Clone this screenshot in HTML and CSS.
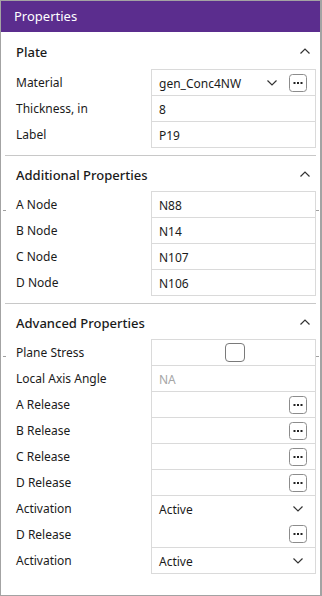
FILE: index.html
```html
<!DOCTYPE html>
<html>
<head>
  <title>Properties</title>
  <link rel="stylesheet" href="styles.css">
</head>
<body>
  <div class="panel">
    <div class="title">Properties</div>

    <div class="section first">
      <div class="sec-head">
        <span>Plate</span>
        <svg class="caret" width="10" height="6" viewBox="0 0 10 6"><path d="M0.5 5.5 L5 1 L9.5 5.5" fill="none" stroke="#333" stroke-width="1.2"/></svg>
      </div>
      <div class="grid">
        <div class="lbl">Material</div>
        <div class="val">
          <span class="txt">gen_Conc4NW</span>
          <svg class="drop" width="10" height="6" viewBox="0 0 10 6"><path d="M0.5 0.5 L5 5 L9.5 0.5" fill="none" stroke="#333" stroke-width="1.2"/></svg>
          <svg class="more" width="18" height="18" viewBox="0 0 18 18"><rect x="0.5" y="0.5" width="17" height="17" rx="3" fill="#fff" stroke="#8c8c8c"/><rect x="4.5" y="8" width="2" height="2" fill="#222"/><rect x="8" y="8" width="2" height="2" fill="#222"/><rect x="11.5" y="8" width="2" height="2" fill="#222"/></svg>
        </div>
        <div class="lbl">Thickness, in</div>
        <div class="val"><span class="txt">8</span></div>
        <div class="lbl">Label</div>
        <div class="val last"><span class="txt">P19</span></div>
      </div>
    </div>

    <div class="section">
      <div class="sec-head">
        <span>Additional Properties</span>
        <svg class="caret" width="10" height="6" viewBox="0 0 10 6"><path d="M0.5 5.5 L5 1 L9.5 5.5" fill="none" stroke="#333" stroke-width="1.2"/></svg>
      </div>
      <div class="grid">
        <div class="lbl">A Node</div>
        <div class="val"><span class="txt">N88</span></div>
        <div class="lbl">B Node</div>
        <div class="val"><span class="txt">N14</span></div>
        <div class="lbl">C Node</div>
        <div class="val"><span class="txt">N107</span></div>
        <div class="lbl">D Node</div>
        <div class="val last"><span class="txt">N106</span></div>
      </div>
    </div>

    <div class="section end">
      <div class="sec-head">
        <span>Advanced Properties</span>
        <svg class="caret" width="10" height="6" viewBox="0 0 10 6"><path d="M0.5 5.5 L5 1 L9.5 5.5" fill="none" stroke="#333" stroke-width="1.2"/></svg>
      </div>
      <div class="grid">
        <div class="lbl">Plane Stress</div>
        <div class="val center"><span class="check"></span></div>
        <div class="lbl">Local Axis Angle</div>
        <div class="val"><span class="txt dim">NA</span></div>
        <div class="lbl">A Release</div>
        <div class="val"><span class="txt"></span>
          <svg class="more" width="18" height="18" viewBox="0 0 18 18"><rect x="0.5" y="0.5" width="17" height="17" rx="3" fill="#fff" stroke="#8c8c8c"/><rect x="4.5" y="8" width="2" height="2" fill="#222"/><rect x="8" y="8" width="2" height="2" fill="#222"/><rect x="11.5" y="8" width="2" height="2" fill="#222"/></svg>
        </div>
        <div class="lbl">B Release</div>
        <div class="val"><span class="txt"></span>
          <svg class="more" width="18" height="18" viewBox="0 0 18 18"><rect x="0.5" y="0.5" width="17" height="17" rx="3" fill="#fff" stroke="#8c8c8c"/><rect x="4.5" y="8" width="2" height="2" fill="#222"/><rect x="8" y="8" width="2" height="2" fill="#222"/><rect x="11.5" y="8" width="2" height="2" fill="#222"/></svg>
        </div>
        <div class="lbl">C Release</div>
        <div class="val"><span class="txt"></span>
          <svg class="more" width="18" height="18" viewBox="0 0 18 18"><rect x="0.5" y="0.5" width="17" height="17" rx="3" fill="#fff" stroke="#8c8c8c"/><rect x="4.5" y="8" width="2" height="2" fill="#222"/><rect x="8" y="8" width="2" height="2" fill="#222"/><rect x="11.5" y="8" width="2" height="2" fill="#222"/></svg>
        </div>
        <div class="lbl">D Release</div>
        <div class="val"><span class="txt"></span>
          <svg class="more" width="18" height="18" viewBox="0 0 18 18"><rect x="0.5" y="0.5" width="17" height="17" rx="3" fill="#fff" stroke="#8c8c8c"/><rect x="4.5" y="8" width="2" height="2" fill="#222"/><rect x="8" y="8" width="2" height="2" fill="#222"/><rect x="11.5" y="8" width="2" height="2" fill="#222"/></svg>
        </div>
        <div class="lbl">Activation</div>
        <div class="val"><span class="txt">Active</span>
          <svg class="drop wide" width="10" height="6" viewBox="0 0 10 6"><path d="M0.5 0.5 L5 5 L9.5 0.5" fill="none" stroke="#333" stroke-width="1.2"/></svg>
        </div>
        <div class="lbl">D Release</div>
        <div class="val open"><span class="txt"></span>
          <svg class="more" width="18" height="18" viewBox="0 0 18 18"><rect x="0.5" y="0.5" width="17" height="17" rx="3" fill="#fff" stroke="#8c8c8c"/><rect x="4.5" y="8" width="2" height="2" fill="#222"/><rect x="8" y="8" width="2" height="2" fill="#222"/><rect x="11.5" y="8" width="2" height="2" fill="#222"/></svg>
        </div>
        <div class="lbl">Activation</div>
        <div class="val last"><span class="txt">Active</span>
          <svg class="drop wide" width="10" height="6" viewBox="0 0 10 6"><path d="M0.5 0.5 L5 5 L9.5 0.5" fill="none" stroke="#333" stroke-width="1.2"/></svg>
        </div>
      </div>
    </div>

    <!-- splitter ticks on the panel edges -->
    <span class="tick l t1"></span>
    <span class="tick r t1"></span>
    <span class="tick l t2"></span>
    <span class="tick r t2"></span>
  </div>
</body>
</html>
```

FILE: styles.css
```css
html, body {
  margin: 0;
  padding: 0;
  background: #fff;
}
body {
  font-family: "Noto Sans", "Open Sans", sans-serif;
  font-size: 12px;
  color: #1b1b1b;
}
.panel {
  position: relative;
  width: 322px;
  height: 596px;
  box-sizing: border-box;
  border: 1px solid #a3a3a3;
  border-right-width: 2px;
  background: #fff;
}
.title {
  height: 31px;
  line-height: 31px;
  padding-left: 13px;
  background: #5b2d8e;
  color: #fff;
  font-size: 13px;
}
.section {
  margin: 0 4px;
  padding-bottom: 7px;
  border-bottom: 1px solid #c8c8c8;
}
.section.first .sec-head {
  height: 37px;
}
.section.first {
  padding-bottom: 7px;
}
.section.end {
  border-bottom: none;
}
.sec-head {
  height: 35px;
  display: flex;
  align-items: center;
  justify-content: space-between;
  padding-left: 11px;
  padding-right: 6px;
  font-size: 13px;
  font-weight: 500;
  color: #1a1a1a;
}
.sec-head span {
  padding-top: 2px;
}
.grid {
  display: grid;
  grid-template-columns: 135px 165px;
  padding-left: 11px;
}
.lbl {
  height: 26px;
  box-sizing: border-box;
  padding-top: 1px;
  line-height: 26px;
}
.val {
  height: 26px;
  box-sizing: border-box;
  border: 1px solid #dadada;
  border-bottom: none;
  display: flex;
  align-items: center;
  padding-left: 7px;
  padding-right: 8px;
}
.val.last {
  height: 27px;
  border-bottom: 1px solid #dadada;
}
.val.open {
  border-top: none;
}
.val.center {
  justify-content: center;
  padding: 0;
}
.txt {
  flex: 1;
  padding-top: 1px;
}
.txt.dim {
  color: #a6a6a6;
}
.drop {
  margin-right: 12px;
}
.drop.wide {
  margin-right: 4px;
}
.more {
  display: block;
}
.check {
  width: 18px;
  height: 17px;
  border: 1px solid #7a7a7a;
  border-radius: 4px;
  background: #fff;
  margin-left: 2px;
}
.tick {
  position: absolute;
  width: 3px;
  height: 1px;
  background: #a0a0a0;
}
.tick.l { left: 2px; }
.tick.r { right: 1px; }
.tick.t1 { top: 209px; }
.tick.t2 { top: 355px; }
```
